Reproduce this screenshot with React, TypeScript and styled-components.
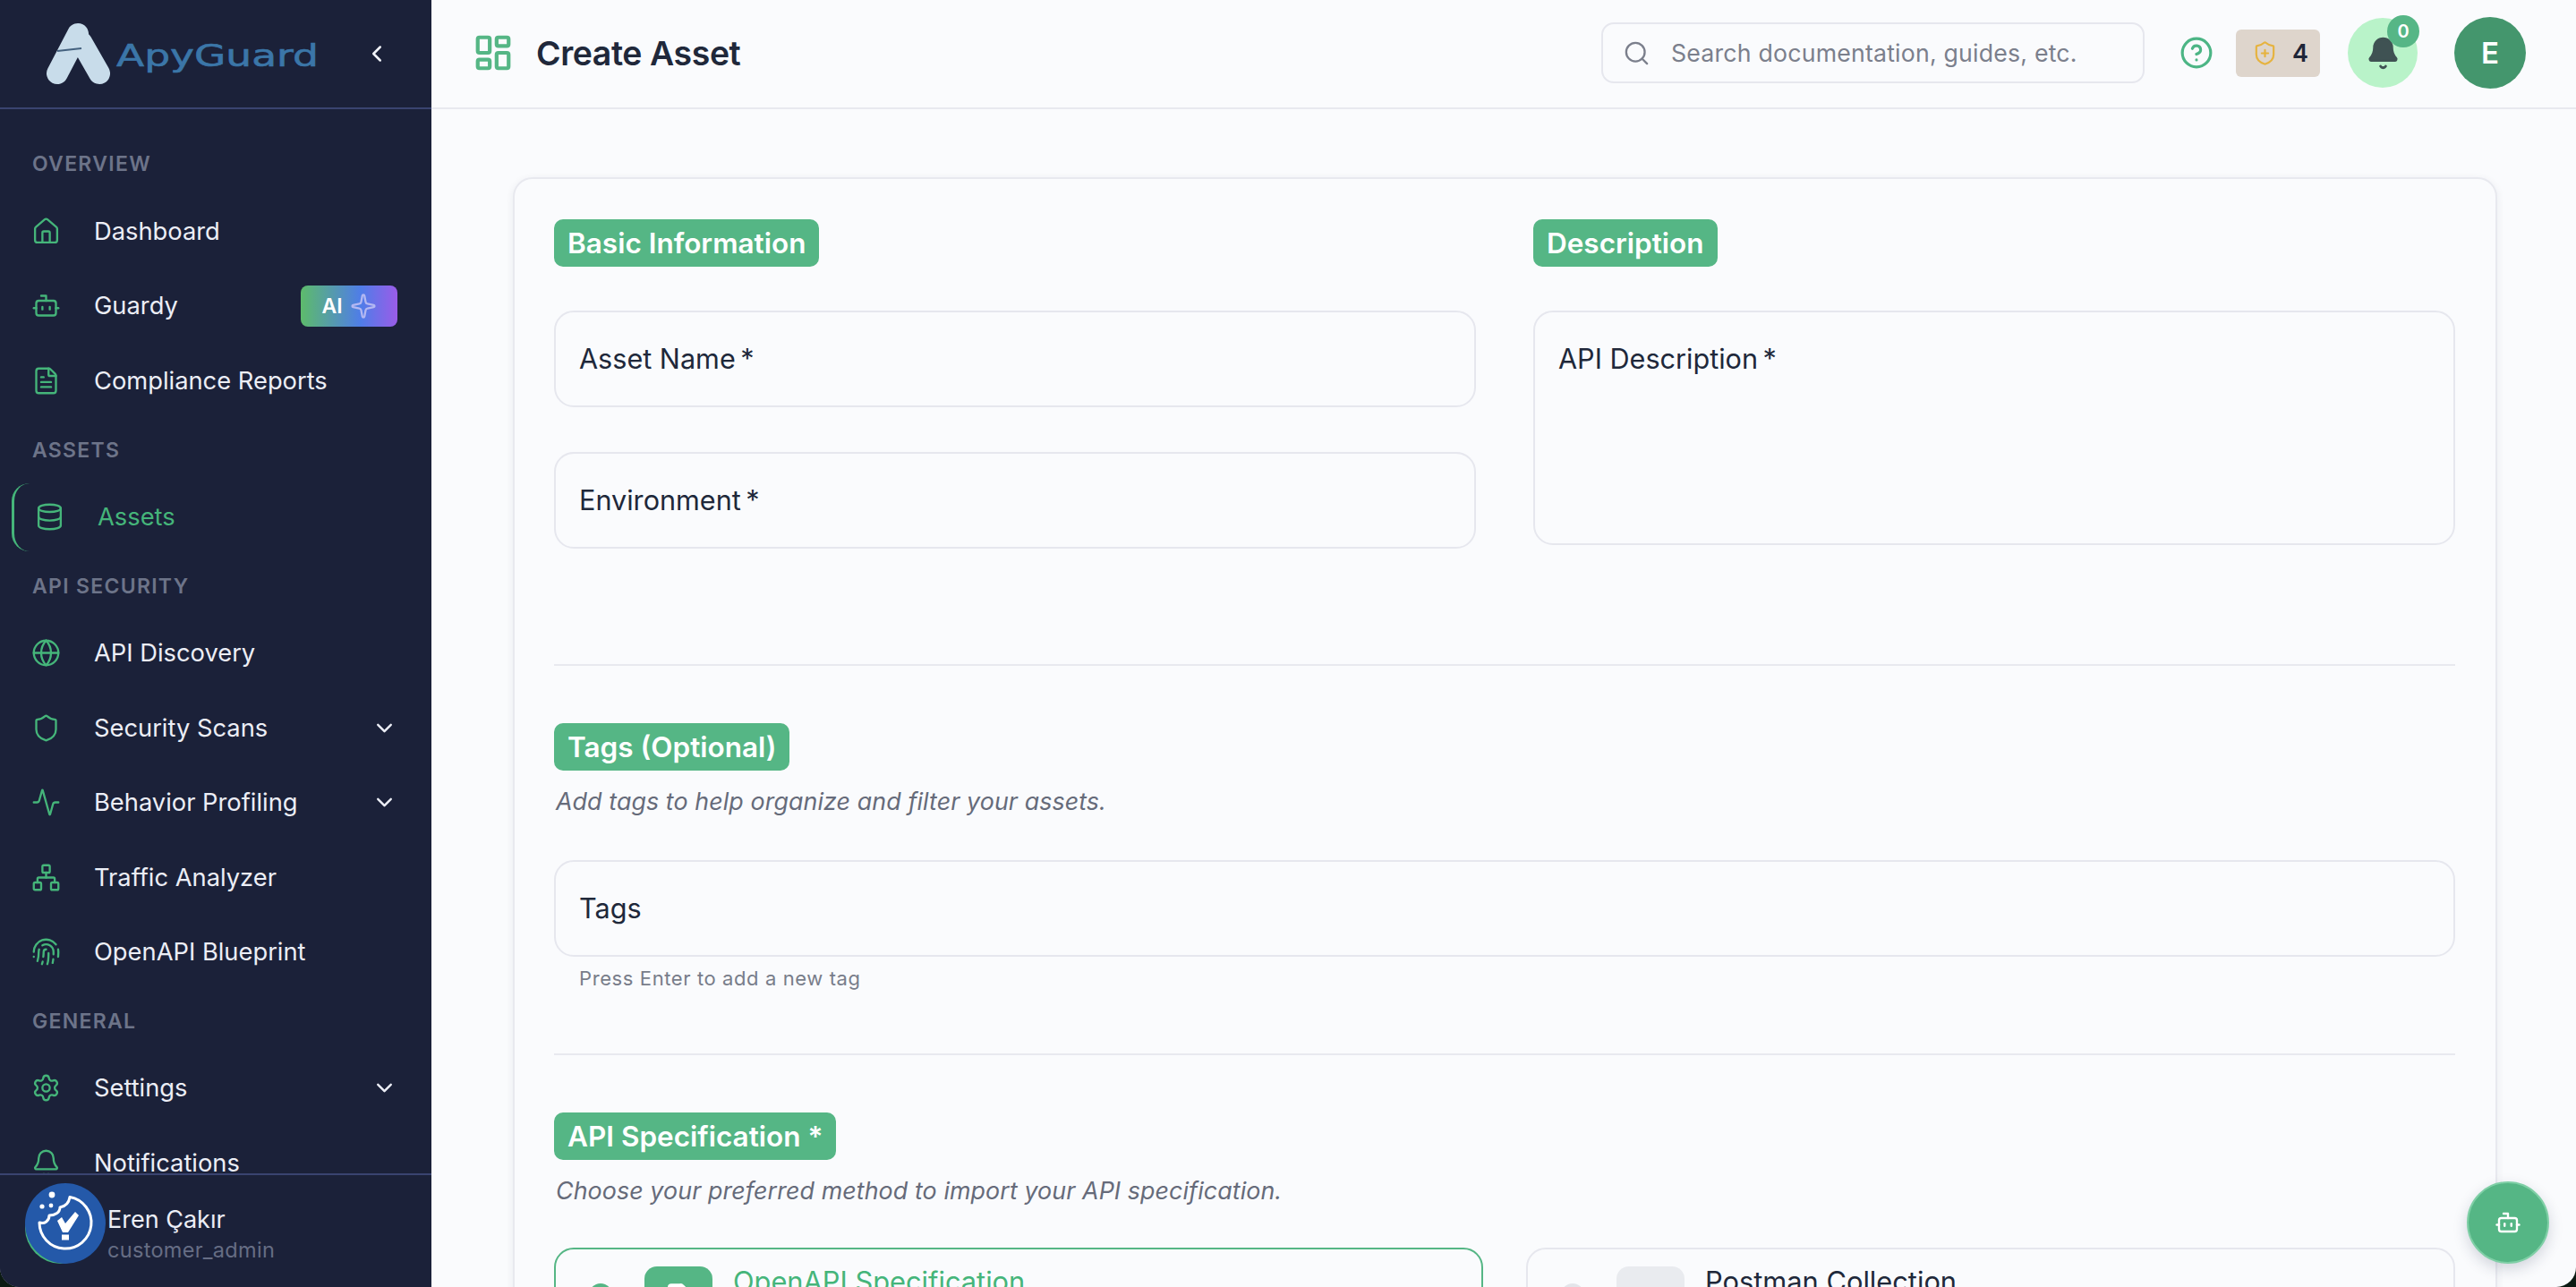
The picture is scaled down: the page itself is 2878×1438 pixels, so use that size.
import React from 'react';
import styled, { createGlobalStyle } from 'styled-components';
import {
  Activity,
  Bell,
  Bot,
  ChevronDown,
  ChevronLeft,
  CircleHelp,
  Database,
  FileText,
  Fingerprint,
  Globe,
  House,
  LayoutDashboard,
  Network,
  Search,
  Settings,
  Shield,
  ShieldPlus,
  Sparkle,
} from 'lucide-react';

const GlobalStyle = createGlobalStyle`
  html, body {
    margin: 0;
    height: 100%;
    background: #0b1a12;
    overflow: hidden;
  }
  * {
    box-sizing: border-box;
  }
  body {
    font-family: Inter, "Noto Sans", sans-serif;
  }
`;

const Page = styled.div`
  position: relative;
  display: flex;
  width: 100vw;
  height: 100vh;
  overflow: hidden;
  border-radius: 0 0 22px 22px;
  background: #fafbfd;
`;

const Sidebar = styled.aside`
  display: flex;
  flex-direction: column;
  flex: 0 0 482px;
  height: 100%;
  background: #1b2139;
`;

const LogoBar = styled.div`
  display: flex;
  align-items: center;
  flex: 0 0 122px;
  padding: 0 44px 0 51px;
  border-bottom: 2px solid #3a4470;
`;

const LogoMark = styled.svg`
  width: 72px;
  height: 70px;
  flex: none;
`;

const LogoText = styled.span`
  display: inline-block;
  width: 160px;
  margin-left: 7px;
  margin-top: 6px;
  font-family: "DejaVu Sans", sans-serif;
  font-size: 33px;
  line-height: 40px;
  color: #3b76a8;
  white-space: nowrap;
  -webkit-text-stroke: 0.6px #3b76a8;
  transform: scaleX(1.38);
  transform-origin: left center;
`;

const CollapseButton = styled.div`
  display: flex;
  margin-left: auto;
  margin-right: 2px;
  color: #f1f3f9;
`;

const Nav = styled.nav`
  display: flex;
  flex-direction: column;
  flex: 1;
  min-height: 0;
  gap: 7.6px;
  padding: 30px 0 0 0;
  overflow: hidden;
`;

const SectionLabel = styled.div`
  display: flex;
  align-items: center;
  flex: 0 0 60.8px;
  padding: 2px 0 0 36px;
  font-size: 23px;
  font-weight: 600;
  letter-spacing: 1.3px;
  color: #6d7489;
`;

const Item = styled.div<{ $active?: boolean }>`
  display: flex;
  align-items: center;
  flex: 0 0 76px;
  margin-left: ${(p) => (p.$active ? '13px' : '0')};
  margin-right: 38px;
  padding-left: ${(p) => (p.$active ? '23px' : '35px')};
  border-left: ${(p) => (p.$active ? '3px solid #45b57a' : 'none')};
  border-radius: ${(p) => (p.$active ? '20px' : '0')};
  font-size: 27.3px;
  color: ${(p) => (p.$active ? '#45b57a' : '#eceef6')};

  & > svg:first-child {
    flex: none;
    color: #45b57a;
  }
`;

const ItemText = styled.span`
  margin-left: 37px;
  white-space: nowrap;
`;

const ItemChevron = styled(ChevronDown)`
  margin-left: auto;
  margin-right: 0;
  color: #eceef6;
`;

const AiBadge = styled.span`
  display: flex;
  align-items: center;
  justify-content: center;
  gap: 8px;
  width: 108px;
  height: 46px;
  margin-left: auto;
  border-radius: 8px;
  background: linear-gradient(90deg, #5dbb6b 0%, #4f7de8 62%, #9a5ce8 100%);
  font-size: 23px;
  font-weight: 600;
  color: #fff;

  svg {
    color: #b4b8f2;
  }
`;

const UserFooter = styled.div`
  display: flex;
  align-items: flex-start;
  flex: 0 0 127px;
  padding: 19px 0 0 28px;
  border-top: 2px solid #3a4470;
  background: #1b2139;
`;

const UserAvatar = styled.div`
  flex: none;
  width: 80px;
  height: 80px;
  border-radius: 50%;
  background: #45b57a;
`;

const UserInfo = styled.div`
  display: flex;
  flex-direction: column;
  gap: 3px;
  margin: 15px 0 0 12px;
`;

const UserName = styled.div`
  font-size: 27px;
  line-height: 32px;
  color: #eceef6;
`;

const UserRole = styled.div`
  font-size: 23.5px;
  line-height: 30px;
  letter-spacing: 0.3px;
  color: #666d84;
`;

const CookieButton = styled.svg`
  position: absolute;
  left: 28px;
  bottom: 26px;
  width: 90px;
  height: 90px;
`;

const Main = styled.main`
  display: flex;
  flex-direction: column;
  flex: 1;
  min-width: 0;
  height: 100%;
`;

const Header = styled.header`
  display: flex;
  align-items: center;
  flex: 0 0 122px;
  padding: 0 56px 2px 46px;
  border-bottom: 2px solid #e8e9ef;
`;

const HeaderIcon = styled(LayoutDashboard)`
  flex: none;
  color: #55b685;
`;

const Title = styled.h1`
  margin: 0 0 0 25px;
  font-size: 37.4px;
  font-weight: 600;
  letter-spacing: -0.4px;
  color: #20283a;
`;

const SearchBox = styled.div`
  display: flex;
  align-items: center;
  width: 607px;
  height: 68px;
  margin-left: auto;
  padding-left: 22px;
  border: 2px solid #e6e7ee;
  border-radius: 14px;
  font-size: 26.7px;
  letter-spacing: 0.2px;
  color: #7b7f8c;

  svg {
    flex: none;
    margin-right: 23px;
  }
`;

const HelpIcon = styled(CircleHelp)`
  flex: none;
  margin-left: 39px;
  color: #4cb585;
`;

const CreditBadge = styled.div`
  display: flex;
  align-items: center;
  gap: 16px;
  width: 94px;
  height: 53px;
  margin-left: 25px;
  padding-left: 18px;
  border-radius: 6px;
  background: #ded5cc;
  font-size: 27px;
  font-weight: 600;
  color: #1f2638;

  svg {
    flex: none;
    color: #e6b33f;
  }
`;

const BellButton = styled.div`
  position: relative;
  display: flex;
  align-items: center;
  justify-content: center;
  flex: none;
  width: 78px;
  height: 78px;
  margin-left: 31px;
  border-radius: 50%;
  background: #b9f3c9;
  color: #3f5253;

  svg {
    fill: currentColor;
  }
`;

const BellCount = styled.span`
  position: absolute;
  top: -3px;
  right: -2px;
  display: flex;
  align-items: center;
  justify-content: center;
  width: 36px;
  height: 36px;
  border-radius: 50%;
  background: #56b686;
  font-size: 20px;
  font-weight: 600;
  color: #fff;
`;

const HeaderAvatar = styled.div`
  display: flex;
  align-items: center;
  justify-content: center;
  flex: none;
  width: 80px;
  height: 80px;
  margin-left: 41px;
  border-radius: 50%;
  background: #44966d;
  font-size: 33px;
  font-weight: 600;
  color: #fff;
`;

const Content = styled.div`
  flex: 1;
  min-height: 0;
  padding: 76px 88px 0 91px;
  overflow: hidden;
`;

const Card = styled.div`
  padding: 45px 45px 46px 44px;
  border: 2px solid #e8e9ef;
  border-radius: 22px;
  background: #fafbfd;
  box-shadow: 0 2px 10px rgba(30, 40, 70, 0.07);
`;

const TwoColumns = styled.div<{ $gap: number }>`
  display: grid;
  grid-template-columns: 1fr 1fr;
  gap: ${(p) => p.$gap}px;
`;

const Column = styled.div`
  display: flex;
  flex-direction: column;
  align-items: flex-start;
`;

const Pill = styled.h2`
  display: inline-flex;
  align-items: center;
  height: 53px;
  margin: 0;
  padding: 0 15px;
  border-radius: 10px;
  background: #55b685;
  font-size: 31.5px;
  font-weight: 600;
  color: #fff;
  white-space: nowrap;
`;

const Field = styled.div<{ $height?: number; $top?: boolean }>`
  display: flex;
  align-items: ${(p) => (p.$top ? 'flex-start' : 'center')};
  width: 100%;
  height: ${(p) => p.$height ?? 108}px;
  padding: ${(p) => (p.$top ? '34px 26px 0' : '0 26px')};
  border: 2px solid #e6e7ee;
  border-radius: 22px;
  font-size: 30.6px;
  line-height: 36px;
  white-space: pre;
  color: #20283a;
`;

const FieldStack = styled.div`
  display: flex;
  flex-direction: column;
  gap: 50px;
  width: 100%;
  margin-top: 49px;
`;

const Divider = styled.hr<{ $above: number }>`
  height: 2px;
  margin: ${(p) => p.$above}px 0 64px;
  border: 0;
  background: #e8e9ef;
`;

const Hint = styled.p`
  margin: 16px 0 0 2px;
  font-size: 26.8px;
  line-height: 36px;
  font-style: italic;
  letter-spacing: 0.1px;
  color: #666b7a;
`;

const TagsField = styled(Field)`
  margin-top: 48px;
`;

const Helper = styled.div`
  margin: 6px 0 0 28px;
  font-size: 22px;
  line-height: 36px;
  letter-spacing: 0.6px;
  color: #787d8a;
`;

const Options = styled(TwoColumns)`
  width: 2124px;
  margin-top: 46px;
`;

const Option = styled.div<{ $selected?: boolean }>`
  display: flex;
  align-items: flex-start;
  height: 150px;
  padding: 19px 0 0 37px;
  border: 2px solid ${(p) => (p.$selected ? '#55b685' : '#e6e7ee')};
  border-radius: 22px;
`;

const Radio = styled.span<{ $selected?: boolean }>`
  flex: none;
  width: 26px;
  height: 26px;
  margin-top: 19px;
  border-radius: 50%;
  background: ${(p) => (p.$selected ? '#55b685' : '#e3e5ea')};
`;

const OptionIcon = styled.span<{ $selected?: boolean }>`
  display: flex;
  justify-content: center;
  flex: none;
  width: 76px;
  height: 76px;
  margin-left: 36px;
  padding-top: 18px;
  border-radius: 14px;
  background: ${(p) => (p.$selected ? '#55b685' : '#e9ebef')};
  color: #fff;
`;

const OptionTitle = styled.span<{ $selected?: boolean }>`
  margin-left: 23px;
  font-size: 30.8px;
  line-height: 34px;
  color: ${(p) => (p.$selected ? '#45b57a' : '#20283a')};
`;

const ChatButton = styled.div`
  position: absolute;
  right: 30px;
  bottom: 26px;
  display: flex;
  align-items: center;
  justify-content: center;
  width: 92px;
  height: 92px;
  border: 2px solid #7fcfa6;
  border-radius: 50%;
  background: #55b685;
  box-shadow: 0 6px 16px rgba(30, 40, 70, 0.18);
  color: #fff;
`;

type NavRow = {
  label: string;
  icon: React.ElementType;
  chevron?: boolean;
  active?: boolean;
  ai?: boolean;
};

type NavGroup = { title: string; items: NavRow[] };

const groups: NavGroup[] = [
  {
    title: 'OVERVIEW',
    items: [
      { label: 'Dashboard', icon: House },
      { label: 'Guardy', icon: Bot, ai: true },
      { label: 'Compliance Reports', icon: FileText },
    ],
  },
  { title: 'ASSETS', items: [{ label: 'Assets', icon: Database, active: true }] },
  {
    title: 'API SECURITY',
    items: [
      { label: 'API Discovery', icon: Globe },
      { label: 'Security Scans', icon: Shield, chevron: true },
      { label: 'Behavior Profiling', icon: Activity, chevron: true },
      { label: 'Traffic Analyzer', icon: Network },
      { label: 'OpenAPI Blueprint', icon: Fingerprint },
    ],
  },
  {
    title: 'GENERAL',
    items: [
      { label: 'Settings', icon: Settings, chevron: true },
      { label: 'Notifications', icon: Bell },
    ],
  },
];

const App: React.FC = () => {
  return (
    <Page>
      <GlobalStyle />
      <Sidebar>
        <LogoBar>
          <LogoMark viewBox="0 0 72 70">
            <g stroke="#c8dcea" strokeWidth="24" strokeLinecap="round" fill="none">
              <line x1="40" y1="22" x2="60" y2="57" />
              <line x1="36" y1="13" x2="13" y2="57" />
            </g>
            <line x1="13" y1="32" x2="40" y2="29" stroke="#44617f" strokeWidth="2" />
          </LogoMark>
          <LogoText>ApyGuard</LogoText>
          <CollapseButton>
            <ChevronLeft size={30} strokeWidth={2} />
          </CollapseButton>
        </LogoBar>

        <Nav>
          {groups.map((group) => (
            <React.Fragment key={group.title}>
              <SectionLabel>{group.title}</SectionLabel>
              {group.items.map((row) => (
                <Item key={row.label} $active={row.active}>
                  <row.icon size={33} strokeWidth={1.7} />
                  <ItemText>{row.label}</ItemText>
                  {row.ai && (
                    <AiBadge>
                      AI
                      <Sparkle size={30} strokeWidth={1.8} />
                    </AiBadge>
                  )}
                  {row.chevron && <ItemChevron size={29} strokeWidth={2} />}
                </Item>
              ))}
            </React.Fragment>
          ))}
        </Nav>

        <UserFooter>
          <UserAvatar />
          <UserInfo>
            <UserName>Eren Çakır</UserName>
            <UserRole>customer_admin</UserRole>
          </UserInfo>
        </UserFooter>
      </Sidebar>

      <CookieButton viewBox="0 0 90 90">
        <circle cx="45" cy="45" r="45" fill="#2459a9" />
        <path
          d="M50 15.5 A 29 29 0 1 1 16 44 C 22 46 27 42 27 36 C 33 36 39 33 39 27 C 45 26 49 22 50 15.5 Z"
          fill="none"
          stroke="#fff"
          strokeWidth="3"
          strokeLinejoin="round"
        />
        <circle cx="30" cy="13" r="3.4" fill="#fff" />
        <circle cx="19" cy="26" r="2.6" fill="#fff" />
        <circle cx="29" cy="25" r="2.4" fill="#fff" />
        <path d="M36 42 L41 38 L45 45 L56 32 L60 36 L48 55 L42 55 Z" fill="#fff" />
        <rect x="41" y="57.5" width="8" height="6" fill="#fff" />
      </CookieButton>

      <Main>
        <Header>
          <HeaderIcon size={46} strokeWidth={2.2} />
          <Title>Create Asset</Title>
          <SearchBox>
            <Search size={31} strokeWidth={1.8} />
            Search documentation, guides, etc.
          </SearchBox>
          <HelpIcon size={38} strokeWidth={2} />
          <CreditBadge>
            <ShieldPlus size={29} strokeWidth={1.8} />4
          </CreditBadge>
          <BellButton>
            <Bell size={39} strokeWidth={1.8} />
            <BellCount>0</BellCount>
          </BellButton>
          <HeaderAvatar>E</HeaderAvatar>
        </Header>

        <Content>
          <Card>
            <TwoColumns $gap={64}>
              <Column>
                <Pill>Basic Information</Pill>
                <FieldStack>
                  <Field>Asset Name{'\u2009'}*</Field>
                  <Field>Environment{'\u2009'}*</Field>
                </FieldStack>
              </Column>
              <Column>
                <Pill>Description</Pill>
                <FieldStack>
                  <Field $height={262} $top>
                    API Description{'\u2009'}*
                  </Field>
                </FieldStack>
              </Column>
            </TwoColumns>

            <Divider $above={129} />

            <Pill>Tags (Optional)</Pill>
            <Hint>Add tags to help organize and filter your assets.</Hint>
            <TagsField>Tags</TagsField>
            <Helper>Press Enter to add a new tag</Helper>

            <Divider $above={66} />

            <Pill>API Specification *</Pill>
            <Hint>Choose your preferred method to import your API specification.</Hint>
            <Options $gap={48}>
              <Option $selected>
                <Radio $selected />
                <OptionIcon $selected>
                  <FileText size={32} fill="#fff" />
                </OptionIcon>
                <OptionTitle $selected>OpenAPI Specification</OptionTitle>
              </Option>
              <Option>
                <Radio />
                <OptionIcon />
                <OptionTitle>Postman Collection</OptionTitle>
              </Option>
            </Options>
          </Card>
        </Content>
      </Main>

      <ChatButton>
        <Bot size={30} strokeWidth={1.9} />
      </ChatButton>
    </Page>
  );
};

export default App;
